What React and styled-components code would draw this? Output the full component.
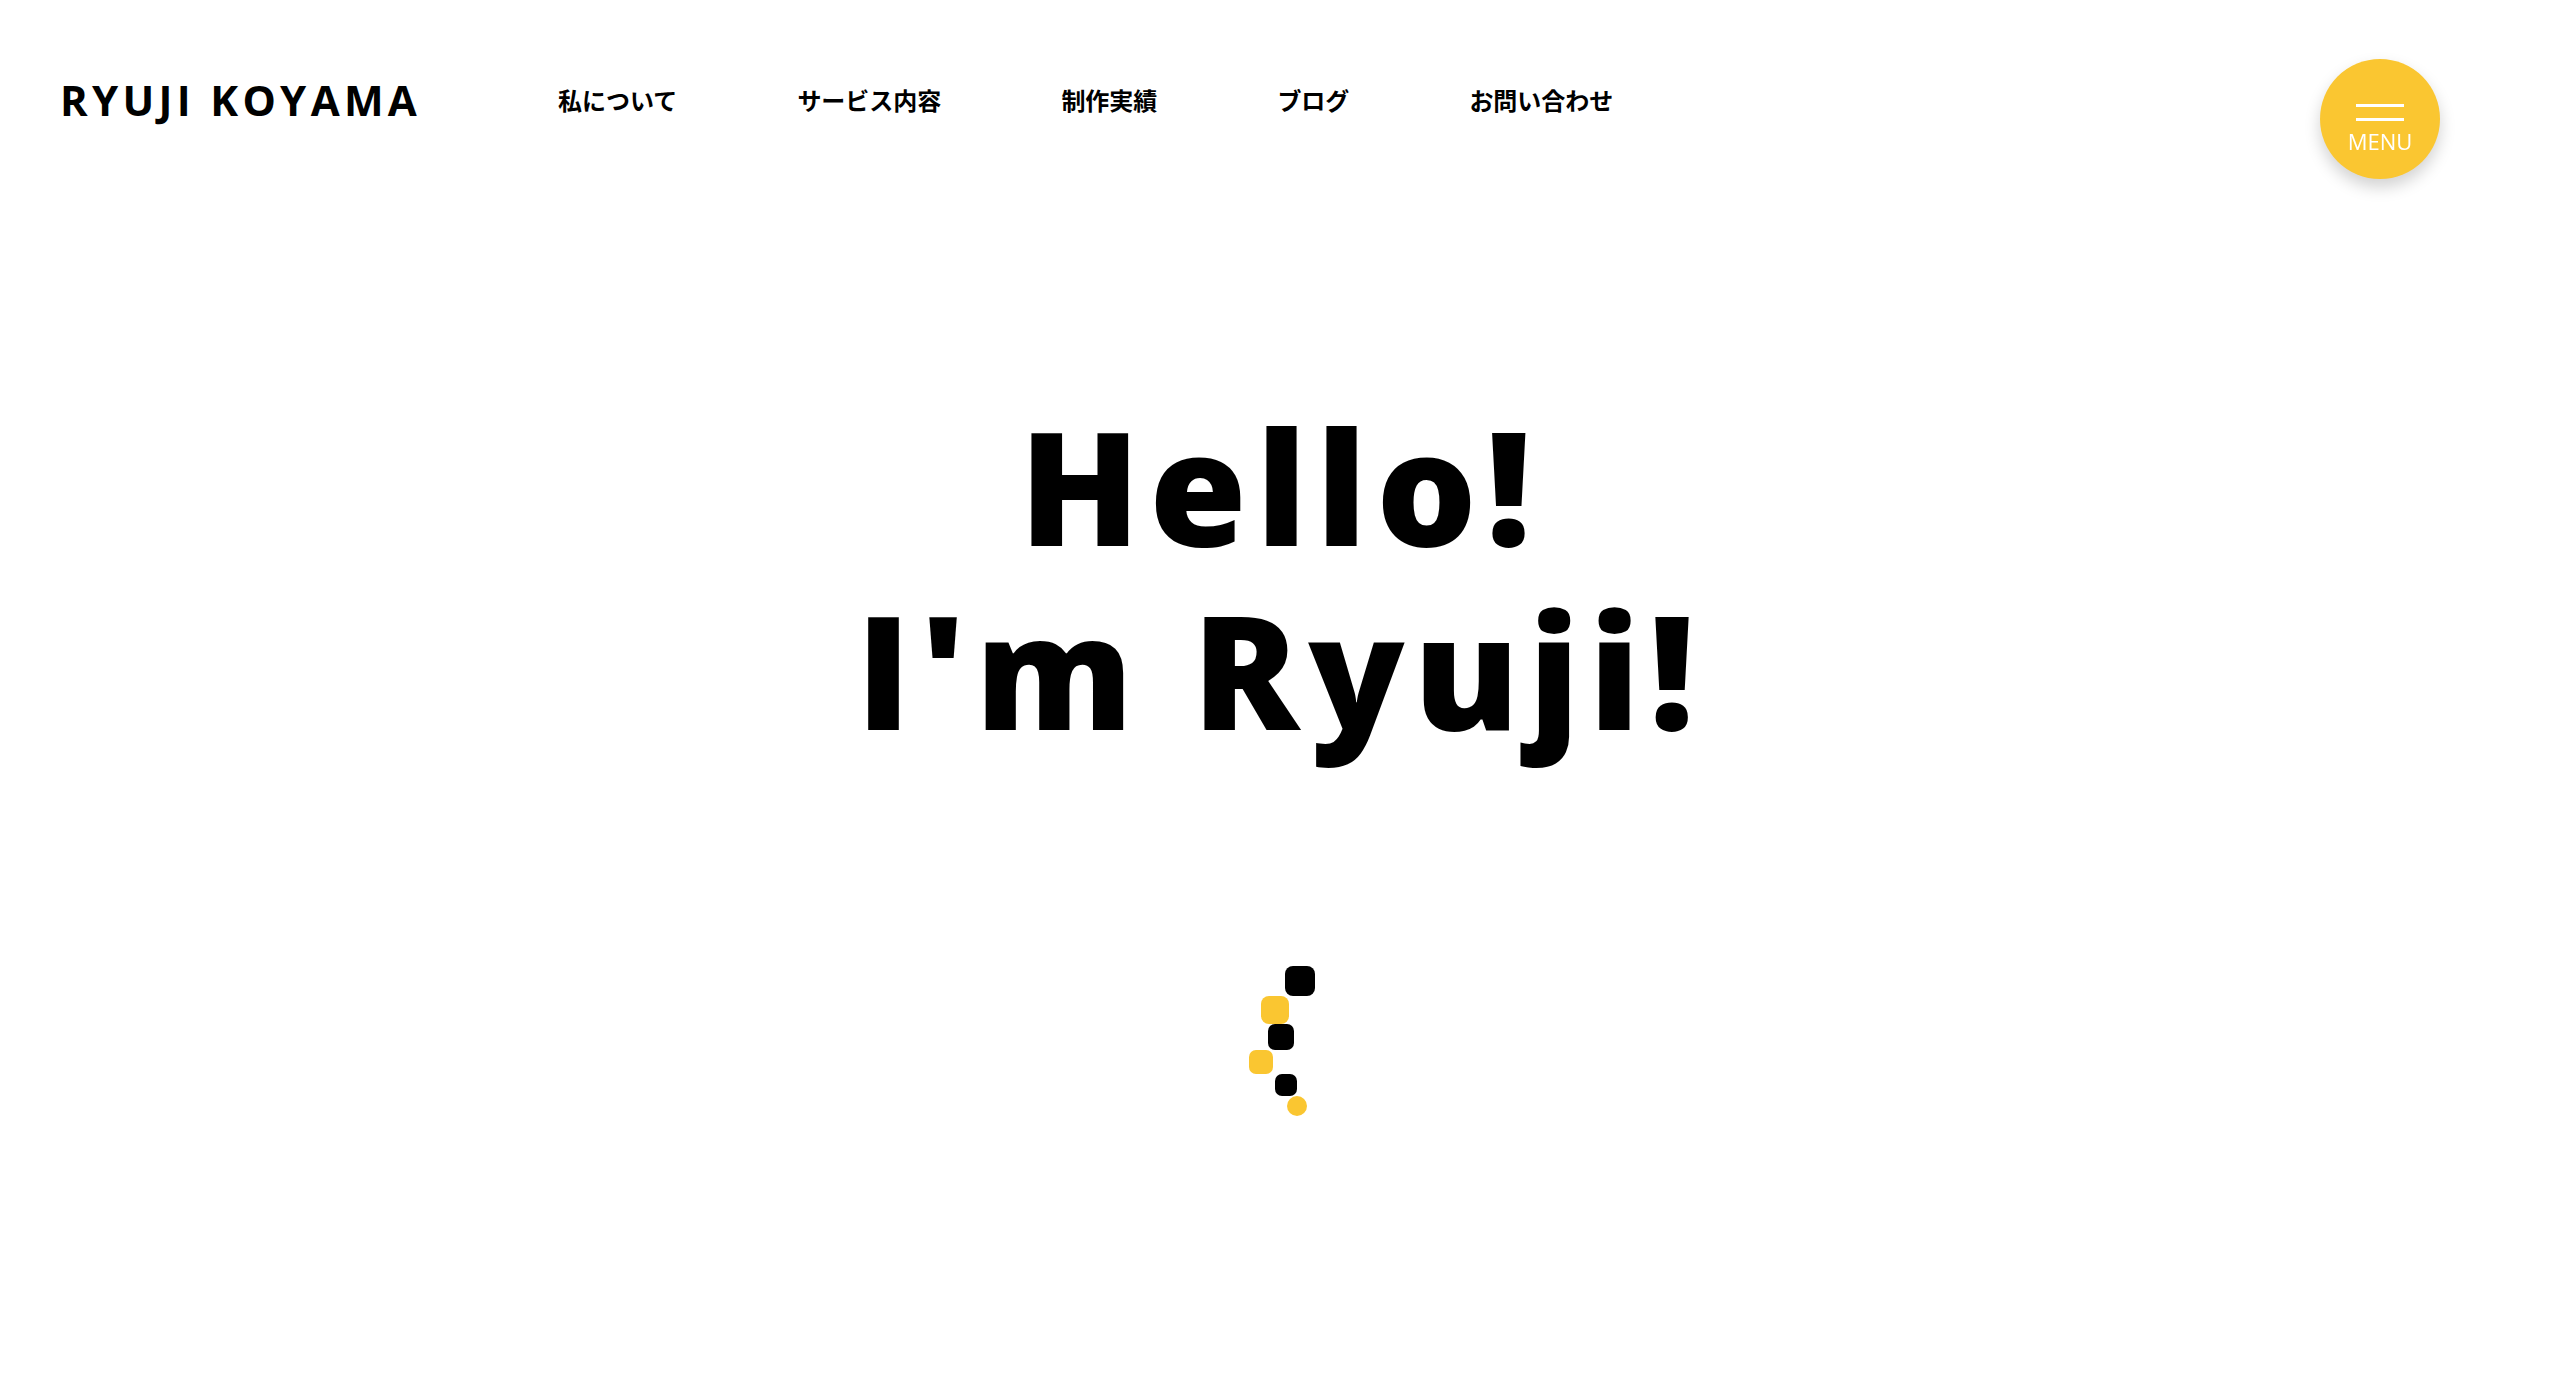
import React from "react";
import styled, { createGlobalStyle } from "styled-components";

const GlobalStyle = createGlobalStyle`
  html, body {
    margin: 0;
    padding: 0;
    background: #ffffff;
  }
  body {
    font-family: "Open Sans", "Noto Sans CJK JP", sans-serif;
    color: #000;
  }
  * { box-sizing: border-box; }
`;

const YELLOW = "#fac631";

const Page = styled.div`
  width: 100%;
  min-height: 1374px;
  display: flex;
  flex-direction: column;
`;

const Header = styled.header`
  height: 200px;
  display: flex;
  align-items: center;
  padding: 0 60px;
`;

const Logo = styled.div`
  font-family: "Open Sans", sans-serif;
  font-weight: 700;
  font-size: 42px;
  letter-spacing: 4.3px;
  line-height: 1;
  white-space: nowrap;
`;

const Nav = styled.nav`
  display: flex;
  align-items: center;
  gap: 120px;
  margin-left: 137px;
`;

const NavLink = styled.a`
  font-family: "Noto Sans CJK JP", sans-serif;
  font-weight: 700;
  font-size: 24px;
  line-height: 1;
  color: #000;
  text-decoration: none;
  white-space: nowrap;
`;

const MenuButton = styled.button`
  position: fixed;
  top: 59px;
  right: 120px;
  width: 120px;
  height: 120px;
  border: none;
  border-radius: 50%;
  background: ${YELLOW};
  box-shadow: 0 8px 16px rgba(0, 0, 0, 0.18);
  display: flex;
  flex-direction: column;
  align-items: center;
  padding: 45px 0 0;
  cursor: pointer;
`;

const Bars = styled.span`
  display: flex;
  flex-direction: column;
  gap: 11px;
`;

const Bar = styled.span`
  display: block;
  width: 48px;
  height: 3px;
  background: #fff;
`;

const MenuLabel = styled.span`
  margin-top: 10px;
  font-family: "Open Sans", sans-serif;
  font-size: 22px;
  line-height: 21px;
  color: #fff;
`;

const Hero = styled.main`
  display: flex;
  flex-direction: column;
  align-items: center;
  margin-top: 193px;
`;

const Title = styled.h1`
  margin: 0;
  font-family: "Open Sans", sans-serif;
  font-weight: 800;
  font-size: 158px;
  letter-spacing: 9px;
  text-align: center;
`;

const TitleLine = styled.span`
  display: block;
  height: 184px;
  line-height: 184px;
`;

const Loader = styled.div`
  position: relative;
  width: 70px;
  height: 150px;
  margin-top: 205px;
`;

const Dot = styled.span`
  position: absolute;
  background: ${(p) => (p.$yellow ? YELLOW : "#000")};
  border-radius: ${(p) => p.$r}px;
`;

const dots = [
  { x: 40, y: 0, s: 30, r: 8, yellow: false },
  { x: 16, y: 30, s: 28, r: 8, yellow: true },
  { x: 23, y: 58, s: 26, r: 7, yellow: false },
  { x: 4, y: 84, s: 24, r: 7, yellow: true },
  { x: 30, y: 108, s: 22, r: 7, yellow: false },
  { x: 42, y: 130, s: 20, r: 10, yellow: true },
];

const navItems = ["私について", "サービス内容", "制作実績", "ブログ", "お問い合わせ"];

export default function App() {
  return (
    <Page>
      <GlobalStyle />
      <Header>
        <Logo>RYUJI KOYAMA</Logo>
        <Nav>
          {navItems.map((item) => (
            <NavLink key={item} href="#">
              {item}
            </NavLink>
          ))}
        </Nav>
      </Header>
      <MenuButton aria-label="menu">
        <Bars>
          <Bar />
          <Bar />
        </Bars>
        <MenuLabel>MENU</MenuLabel>
      </MenuButton>
      <Hero>
        <Title>
          <TitleLine>Hello!</TitleLine>
          <TitleLine>I'm Ryuji!</TitleLine>
        </Title>
        <Loader>
          {dots.map((d, i) => (
            <Dot
              key={i}
              $yellow={d.yellow}
              $r={d.r}
              style={{ left: d.x, top: d.y, width: d.s, height: d.s }}
            />
          ))}
        </Loader>
      </Hero>
    </Page>
  );
}
